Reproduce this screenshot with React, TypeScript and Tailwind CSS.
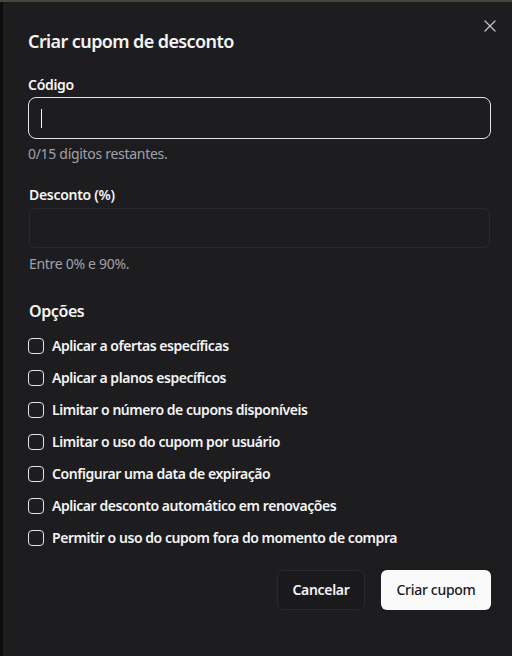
import { X } from "lucide-react";

const options = [
  "Aplicar a ofertas específicas",
  "Aplicar a planos específicos",
  "Limitar o número de cupons disponíveis",
  "Limitar o uso do cupom por usuário",
  "Configurar uma data de expiração",
  "Aplicar desconto automático em renovações",
  "Permitir o uso do cupom fora do momento de compra",
];

export default function App() {
  return (
    <div
      className="w-[512px] h-[656px] flex flex-col bg-[#0c0c0d] overflow-hidden"
      style={{ fontFamily: '"Noto Sans", "Open Sans", sans-serif' }}
    >
      <div className="h-[2px] bg-[#3d4a3c] shrink-0" />
      <div className="flex flex-1 min-h-0">
        <div className="w-[3px] shrink-0" />
        <div className="relative flex-1 bg-[#1d1d20] pl-[25px] pr-[21px] pt-[25px] flex flex-col">
          <button className="absolute top-[14px] right-[12px] text-[#c4c4c8]">
            <X className="w-5 h-5" strokeWidth={1.5} />
          </button>

          <h2 className="text-[18px] leading-7 font-semibold tracking-[-0.6px] text-[#f4f4f5]">
            Criar cupom de desconto
          </h2>

          <label className="mt-5 text-sm leading-5 font-semibold tracking-[-0.3px] text-[#f4f4f5]">Código</label>
          <div className="mt-[2px] h-[42px] rounded-lg border border-[#e4e4e7] flex items-center px-3">
            <div className="w-px h-[19px] bg-[#f4f4f5]" />
          </div>
          <p className="mt-[5px] text-sm leading-5 tracking-[-0.3px] text-[#a1a1aa]">0/15 dígitos restantes.</p>

          <label className="mt-[21px] ml-px text-sm leading-5 font-semibold tracking-[-0.3px] text-[#f4f4f5]">
            Desconto (%)
          </label>
          <div className="mt-[3px] ml-px mr-px h-10 rounded-md border border-[#2a2a2e]" />
          <p className="mt-[6px] ml-px text-sm leading-5 tracking-[-0.3px] text-[#a1a1aa]">Entre 0% e 90%.</p>

          <h3 className="mt-[25px] ml-px text-base leading-6 font-semibold tracking-[-0.4px] text-[#f4f4f5]">Opções</h3>
          <div className="mt-[13px] flex flex-col gap-3">
            {options.map((o) => (
              <label key={o} className="flex items-center gap-2 h-5">
                <span className="w-4 h-4 rounded-[4px] border border-[#e4e4e7]" />
                <span className="text-sm leading-5 font-semibold tracking-[-0.45px] text-[#f4f4f5]">{o}</span>
              </label>
            ))}
          </div>

          <div className="mt-[22px] flex justify-end gap-4">
            <button className="h-10 w-[88px] rounded-md border border-[#2a2a2e] bg-[#1a1a1d] text-sm font-semibold tracking-[-0.3px] text-[#f4f4f5]">
              Cancelar
            </button>
            <button className="h-10 w-[110px] rounded-md bg-[#fafafa] text-sm font-medium tracking-[-0.3px] text-[#18181b]">
              Criar cupom
            </button>
          </div>
        </div>
      </div>
    </div>
  );
}
